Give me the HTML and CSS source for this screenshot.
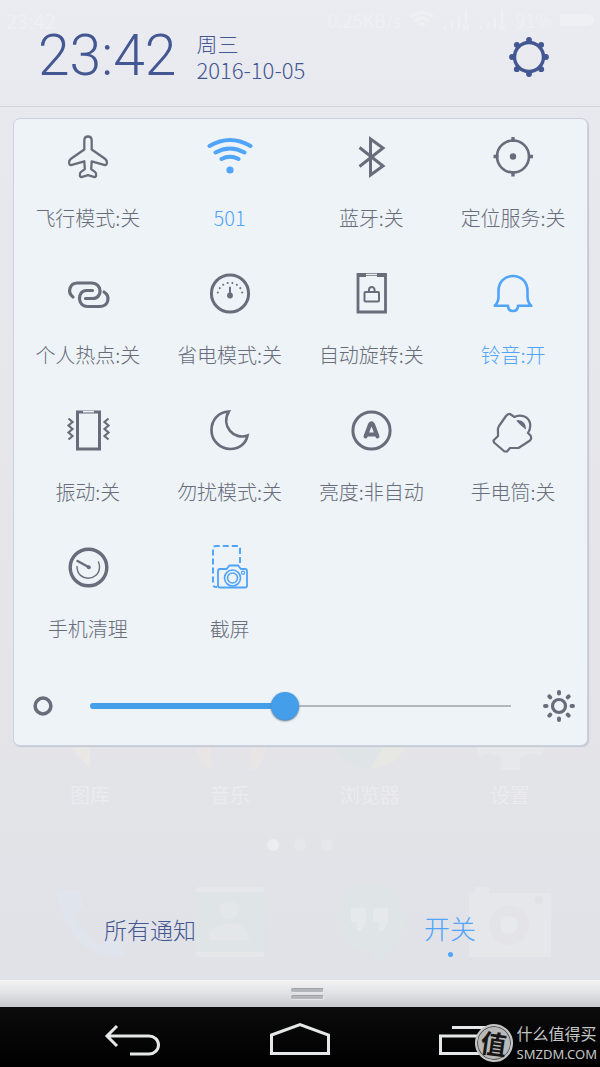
FILE: index.html
```html
<!DOCTYPE html>
<html lang="zh-CN">
<head>
<meta charset="utf-8">
<meta name="viewport" content="width=device-width, initial-scale=1">
<title>控制中心</title>
<link rel="stylesheet" href="styles.css">
</head>
<body>
<div class="screen">
  <main class="shade">
    <div class="home" aria-hidden="true">
      <div class="status">
        <span class="status-time">23:42</span>
        <span>0.25KB/s</span>
        <svg width="26" height="22" viewBox="0 0 26 22"><path d="M2 8Q13-1 24 8M6 12Q13 6 20 12M10 16Q13 13 16 16" fill="none" stroke="currentColor" stroke-width="3"/></svg>
        <svg width="28" height="22" viewBox="0 0 28 22"><path d="M2 20v-3M9 20v-7M16 20V8M23 14V1M20 16l6 5m0-5-6 5" fill="none" stroke="currentColor" stroke-width="2"/></svg>
        <svg width="28" height="22" viewBox="0 0 28 22"><path d="M2 20v-3M9 20v-7M16 20V8M23 14V1M20 16l6 5m0-5-6 5" fill="none" stroke="currentColor" stroke-width="2"/></svg>
        <span>91%</span>
        <svg width="34" height="14" viewBox="0 0 34 14"><path d="M0 1h31v3h3v6h-3v3H0z" fill="currentColor"/></svg>
      </div>
      <div class="apps">
        <div class="app"><svg width="80" height="80" viewBox="0 0 80 80"><path d="M15 52h25v26z" fill="#e9e8e4"/><path d="M40 52h22v7H40z" fill="#e0e6e9"/></svg><span>图库</span></div>
        <div class="app"><svg width="80" height="80" viewBox="0 0 80 80"><path d="M5 50h14l4 29h-6Q7 70 5 50zM77 50H63l-4 29h7q9-9 11-29z" fill="#e9e5e4"/></svg><span>音乐</span></div>
        <div class="app"><svg width="80" height="80" viewBox="0 0 80 80"><circle cx="40" cy="40" r="39" fill="#dfe5e7"/><path d="M40 79 58 50h20Q70 77 40 79z" fill="#e7e7e4"/></svg><span>浏览器</span></div>
        <div class="app"><svg width="80" height="80" viewBox="0 0 80 80"><path d="M4 53h72l-5 13-11-3-10 5v12H31V68l-10-5-11 3z" fill="#e7e8ec"/></svg><span>设置</span></div>
      </div>
      <div class="pages"><i class="page page-on"></i><i class="page"></i><i class="page"></i></div>
      <div class="dock">
        <div class="app"><svg width="80" height="83" viewBox="0 0 80 83"><path d="M6 8h24l3 17-8 9q8 18 26 29l9-7 14 5v14Q18 76 6 8z" fill="#dfe4ed"/></svg></div>
        <div class="app"><svg width="80" height="83" viewBox="0 0 80 83"><rect x="6" y="5" width="68" height="70" rx="3" fill="#e5e7ea"/><rect x="4" y="10" width="72" height="60" rx="3" fill="#dfe5e7"/><circle cx="39" cy="28" r="9" fill="#e4e7ea"/><path d="M19 58q0-16 20-16t20 16z" fill="#e4e7ea"/></svg></div>
        <div class="app"><svg width="80" height="83" viewBox="0 0 80 83"><path d="M40 0a35 35 0 0 1 35 35q0 28-31 46V70A35 35 0 0 1 40 0z" fill="#dfe5e6"/><path d="M21 26h15v14l-5 9h-4v-9h-6zM43 26h15v14l-5 9h-4v-9h-6z" fill="#e5e9eb"/></svg></div>
        <div class="app"><svg width="84" height="83" viewBox="0 0 84 83"><path d="M1 11h6V5h14v6h62v64H1z" fill="#e6e7eb"/><circle cx="41" cy="43" r="20" fill="#e4e3e7"/><circle cx="41" cy="43" r="9" fill="#e8e9ec"/><circle cx="71" cy="18" r="4" fill="#e1e2e6"/></svg></div>
      </div>
    </div>

    <header class="header">
      <time class="clock" datetime="23:42">23:42</time>
      <div class="date"><span>周三</span><time class="day" datetime="2016-10-05">2016-10-05</time></div>
      <button class="icon-button" type="button" aria-label="设置">
        <svg width="42" height="42" viewBox="0 0 42 42" fill="#435792"><circle cx="21" cy="21" r="14.5" fill="none" stroke="#435792" stroke-width="3.4"/><circle cx="21" cy="4" r="2.9"/><circle cx="21" cy="38" r="2.9"/><circle cx="4" cy="21" r="2.9"/><circle cx="38" cy="21" r="2.9"/><circle cx="8.8" cy="8.8" r="2.9"/><circle cx="33.2" cy="8.8" r="2.9"/><circle cx="8.8" cy="33.2" r="2.9"/><circle cx="33.2" cy="33.2" r="2.9"/></svg>
      </button>
    </header>

    <section class="panel" aria-label="开关">
      <div class="tiles">
        <button class="tile" type="button">
          <svg viewBox="0 0 46 46" stroke-width="2.3"><path d="M23 3.500c-2.300 0-3.700 1.700-3.700 4v9L6 25.800c-1.500 1.100-1.900 2.300-1.900 3.700 0 2 .9 3.100 2.800 2.400l12.400-3.600.5 7.800-4 3c-1.300 1-1.300 5.300.6 5.100l6.600-2.100 6.600 2.100c1.900.2 1.900-4.100.6-5.100l-4-3 .5-7.800 12.400 3.600c1.900.7 2.800-.4 2.800-2.400 0-1.400-.4-2.600-1.900-3.700l-13.300-9.300v-9c0-2.300-1.400-4-3.700-4z"/></svg>
          <span>飞行模式:关</span></button>
        <button class="tile tile-on" type="button">
          <svg viewBox="0 0 46 46" stroke-width="4"><path d="M2.500 13q20.500-12 41 0M8.500 19.500q14.500-8 29 0M14.500 26q8.500-4.500 17 0"/><circle cx="23" cy="37" r="3.600" fill="currentColor" stroke="none"/></svg>
          <span>501</span></button>
        <button class="tile" type="button">
          <svg class="crisp" viewBox="0 0 46 46" stroke-width="3"><path d="M11.500 14.500 35 33 22.500 42V6L35 15 11.500 33.500"/></svg>
          <span>蓝牙:关</span></button>
        <button class="tile" type="button">
          <svg class="crisp" viewBox="0 0 46 46" stroke-width="2.600"><circle cx="23" cy="23.500" r="16"/><path d="M23 4v5M23 38v5.500M3.500 23.500h5M38 23.500h5" stroke-width="3.400"/><circle cx="23" cy="23.500" r="3.200" fill="currentColor" stroke="none"/></svg>
          <span>定位服务:关</span></button>

        <button class="tile" type="button">
          <svg viewBox="0 0 46 46" stroke-width="3.200"><path d="M8 27C2 22.500 4.500 13 12.500 13h14c11 0 11.500 15.500 1 15.500h-7"/><path d="M27.500 20.500h-6c-9.500 0-9.500 16 1 16h12c9.500 0 11-10.500 4.500-14.500"/></svg>
          <span>个人热点:关</span></button>
        <button class="tile" type="button">
          <svg viewBox="0 0 46 46" stroke-width="3"><circle cx="23" cy="23.500" r="18.600"/><path d="M23 17.500V25" stroke-width="2"/><circle cx="23" cy="25.500" r="2.900" fill="currentColor" stroke="none"/><path d="M10.800 22.500a12.500 12.500 0 0 1 24.400 0" stroke-width="2" stroke-dasharray="0.100 4.700"/></svg>
          <span>省电模式:关</span></button>
        <button class="tile" type="button">
          <svg class="crisp" viewBox="0 0 46 46" stroke-width="2"><path d="M10 4.500h27.500v37.500H10z" stroke-width="2.800"/><path d="M9 5.500h9M29 5.500h9" stroke-width="3"/><path d="M18 4.500h11" stroke="#edf3f6" stroke-width="1.500"/><rect x="16.500" y="22" width="14.500" height="9.500" rx="1"/><path d="M21 22v-2a2.800 3 0 0 1 5.600 0v2"/></svg>
          <span>自动旋转:关</span></button>
        <button class="tile tile-on" type="button">
          <svg viewBox="0 0 46 46" stroke-width="2.600"><path d="M4.800 35.800c3.200-3 3.700-5.300 3.700-9.300V21c0-8.800 6-15 14.500-15s14.500 6.200 14.500 15v5.500c0 4 .5 6.300 3.700 9.300H28c-.2 3.200-2.300 5.200-5 5.200s-4.800-2-5-5.200z"/></svg>
          <span>铃音:开</span></button>

        <button class="tile" type="button">
          <svg class="crisp" viewBox="0 0 46 46" stroke-width="3"><path d="M12.500 5h22v37h-22z"/><path d="M18 4.700h11" stroke="#edf3f6" stroke-width="1.500"/><path d="m3.500 11.500 4 3.500-4 3.500 4 3.500-4 3.500 4 3.500-4 3.500M43.500 11.500l-4 3.500 4 3.500-4 3.500 4 3.500-4 3.500 4 3.500" stroke-width="2.200"/></svg>
          <span>振动:关</span></button>
        <button class="tile" type="button">
          <svg class="crisp" viewBox="0 0 46 46" stroke-width="2.700"><path d="M21.800 4.500C11.500 5 4.500 13 4.500 23.200c0 10.600 8.700 18.800 18.800 18.800C32.500 42 39 36.500 40.500 28.500 27 33.500 13.500 19 21.800 4.500z"/></svg>
          <span>勿扰模式:关</span></button>
        <button class="tile" type="button">
          <svg viewBox="0 0 46 46" stroke-width="3"><circle cx="23.500" cy="23.500" r="18.600"/><path d="M17.500 29.500 22 17.500q1.500-2.500 3 0l4.500 12M20 27.500h7" stroke-width="4"/></svg>
          <span>亮度:非自动</span></button>
        <button class="tile" type="button">
          <svg viewBox="0 0 46 46" stroke-width="2.200"><path d="M20 7q-2-.5-4 2L9 19q-1.500 2.500-1 5.500V29l-4.500 4.500.5 2 10.500 9h2.500l3-3.500h8.500l11.500-7.500q2-2 .5-5L38 26c4-6.500 2.500-14-3.500-16.500-4-1.500-7.500-1-10 .5z"/><path d="M26.500 14q0-1 1.500-1 7.500.5 8 8.500 0 1.500-1.500 0-3.500-2.500-8-7.500z" fill="currentColor" stroke="none"/></svg>
          <span>手电筒:关</span></button>

        <button class="tile" type="button">
          <svg viewBox="0 0 46 46" stroke-width="3.400"><circle cx="23.500" cy="23.500" r="18.300"/><path d="M12 22.500c0 16 22.500 15 22.500.5q0-2.500-1-5" stroke-width="1.400"/><path d="m12.500 17 11 6" stroke-width="2.400"/><circle cx="23.800" cy="23.200" r="2" fill="currentColor" stroke="none"/></svg>
          <span>手机清理</span></button>
        <button class="tile tile-bright" type="button">
          <svg class="crisp" viewBox="0 0 46 46" stroke-width="2"><path d="M33 19V5q0-3-3-3H9Q6 2 6 5v35q0 3 3 3h1" stroke-dasharray="6 3"/><path d="M13 25h6.500l3-3.500h8.500l3 3.500h4q2 0 2 2v15q0 1.500-2 1.500H13q-2 0-2-1.500V27q0-2 2-2z" stroke-width="1.800"/><circle cx="25.500" cy="34" r="8" stroke-width="1.600"/><circle cx="25.500" cy="34" r="5" stroke-width="1.600"/><circle cx="36" cy="28.800" r="1.600" stroke-width="1.200"/></svg>
          <span>截屏</span></button>
      </div>

      <div class="brightness">
        <svg width="20" height="20" viewBox="0 0 20 20" fill="none" stroke="currentColor"><circle cx="10" cy="10" r="7.900" stroke-width="3.500"/></svg>
        <input class="range" type="range" min="0" max="100" value="46" aria-label="屏幕亮度">
        <svg width="34" height="34" viewBox="0 0 34 34" fill="none" stroke="currentColor" stroke-width="4" stroke-linecap="round"><circle cx="17" cy="17" r="6.500" stroke-width="3.200"/><path d="M17 3v1.500M17 29.500V31M3 17h1.500M29.500 17H31M7.300 7.300l1 1M25.700 25.700l1 1M7.300 26.700l1-1M25.700 8.300l1-1"/></svg>
      </div>
    </section>

    <nav class="tabs" aria-label="页面">
      <a class="tab" href="#notifications">所有通知</a>
      <a class="tab tab-current" href="#switches" aria-current="page">开关</a>
    </nav>
  </main>

  <button class="handle" type="button" aria-label="收起"><i></i><i></i></button>

  <nav class="keys" aria-label="导航键">
    <button class="key" type="button" aria-label="返回"><svg width="58" height="34" viewBox="0 0 58 34"><path d="M14 4 4 14l10 10M4 14h42a9.500 9 0 0 1 0 18H27"/></svg></button>
    <button class="key" type="button" aria-label="主页"><svg width="62" height="34" viewBox="0 0 62 34"><path d="M2.500 13 31 2.500 59.500 13v18.500h-57z"/></svg></button>
    <button class="key" type="button" aria-label="最近任务"><svg width="60" height="34" viewBox="0 0 60 34"><path d="M14 5.500h43v19M2.500 14h43v17.500h-43z"/></svg></button>
    <div class="watermark">
      <span class="seal">值</span>
      <span class="brand"><span>什么值得买</span><span class="domain">SMZDM.COM</span></span>
    </div>
  </nav>
</div>
</body>
</html>
```
FILE: styles.css
```css
* {
  box-sizing: border-box;
}

body {
  margin: 0;
  background: #000;
  font-family: "Noto Sans CJK SC", sans-serif;
  font-weight: 300;
}

button {
  padding: 0;
  border: 0;
  background: none;
  color: inherit;
  font: inherit;
}

svg {
  display: block;
  flex: none;
}

.screen {
  display: flex;
  flex-direction: column;
  min-height: 100vh;
}

.shade {
  position: relative;
  z-index: 0;
  display: flex;
  flex: 1;
  flex-direction: column;
  overflow: hidden;
  background: linear-gradient(#ebecf1, #e8e9ee 12%, #e4e4e9 65%, #e1e2e7);
}

/* Faded launcher behind the shade */
.home {
  position: absolute;
  inset: 0;
  z-index: -1;
  display: flex;
  flex-direction: column;
  padding-bottom: 15px;
  color: #ebebef;
  font-weight: 400;
}

.status {
  display: flex;
  align-items: center;
  gap: 8px;
  height: 40px;
  padding: 0 6px;
  color: #eff0f4;
  font-size: 18px;
}

.status-time {
  flex: 1;
  font-size: 20px;
}

.apps,
.dock {
  display: grid;
  grid-template-columns: repeat(4, 1fr);
  padding: 0 20px;
}

.apps {
  margin-top: auto;
}

.app {
  display: flex;
  flex-direction: column;
  align-items: center;
  gap: 10px;
  font-size: 20px;
  line-height: 30px;
}

.pages {
  display: flex;
  justify-content: center;
  gap: 15px;
  padding: 29px 0 31px;
}

.page {
  width: 12px;
  height: 12px;
  border-radius: 50%;
  background: #e6e7eb;
}

.page-on {
  background: #ecedf1;
}

.header {
  display: flex;
  align-items: center;
  height: 107px;
  padding: 5px 50px 0 38px;
  border-bottom: 1px solid #d3d5dd;
  color: #435792;
}

.clock {
  font: 300 57px/64px Roboto, sans-serif;
}

.date {
  display: flex;
  flex: 1;
  flex-direction: column;
  margin-left: 20px;
  font-size: 21px;
  line-height: 26px;
}

.day {
  font-size: 22px;
}

.icon-button {
  margin-top: 2px;
}

.panel {
  margin: 11px 12px 0 13px;
  padding: 14px 3px 19px;
  border: 1px solid #cdd1df;
  border-radius: 7px;
  background: #edf3f6;
  box-shadow: 1px 1px 1px #c3c7d1;
  color: #696d7b;
}

.tiles {
  display: grid;
  grid-template-columns: repeat(4, 1fr);
  row-gap: 38px;
}

.tile {
  display: flex;
  flex-direction: column;
  align-items: center;
  gap: 25px;
  color: #696d7b;
  font-size: 20px;
  line-height: 28px;
  white-space: nowrap;
}

.tile svg {
  width: 46px;
  height: 46px;
  fill: none;
  stroke: currentColor;
  stroke-linecap: round;
  stroke-linejoin: round;
}

.tile .crisp {
  stroke-linecap: butt;
  stroke-linejoin: miter;
}

.tile-on {
  color: #50a4fa;
}

.tile-bright svg {
  color: #50a4fa;
}

.brightness {
  display: flex;
  align-items: center;
  height: 40px;
  margin-top: 43px;
  padding: 0 8px 0 16px;
}

.range {
  flex: 1;
  min-width: 0;
  height: 30px;
  margin: 0 31px 0 37px;
  appearance: none;
  background: none;
}

.range::-webkit-slider-runnable-track {
  height: 6px;
  border-radius: 3px 0 0 3px;
  background:
    linear-gradient(#459eea, #459eea) 0 0 / 46% 6px no-repeat,
    linear-gradient(#b1b7bb, #b1b7bb) 0 2px / 100% 2px no-repeat;
}

.range::-webkit-slider-thumb {
  width: 28px;
  height: 28px;
  margin-top: -11px;
  appearance: none;
  border-radius: 50%;
  background: #459eea;
  box-shadow: 0 1px 2px #4d6f8e;
}

.tabs {
  display: grid;
  flex: 1;
  grid-template-columns: 1fr 1fr;
  align-items: end;
  padding-bottom: 22px;
}

.tab {
  display: flex;
  flex-direction: column;
  align-items: center;
  height: 46px;
  color: #435792;
  font-size: 23px;
  line-height: 34px;
  text-decoration: none;
}

.tab-current {
  color: #50a4fa;
  font-size: 26px;
  line-height: 32px;
}

.tab-current::after {
  width: 5px;
  height: 5px;
  margin-top: 8px;
  border-radius: 50%;
  background: currentColor;
  content: "";
}

.handle {
  display: flex;
  flex-direction: column;
  align-items: center;
  justify-content: center;
  gap: 2px;
  height: 27px;
  padding-left: 14px;
  background: linear-gradient(#f4f4f5, #e0e1e4 50%, #c7c9cd);
}

.handle i {
  width: 33px;
  height: 5px;
  border: solid #e6e7ea;
  border-width: 1px 1px 1px 0;
  border-top-color: #a2a4a8;
  border-radius: 2px;
  background: #b3b5b9;
}

.keys {
  position: relative;
  display: grid;
  grid-template-columns: repeat(3, 1fr);
  height: 60px;
  padding: 0 48px;
  background: linear-gradient(#0b0b0b, #000);
}

.key {
  display: flex;
  align-items: center;
  justify-content: center;
  padding-top: 4px;
}

.key svg {
  fill: none;
  stroke: #e6e7e8;
  stroke-width: 3;
}

.watermark {
  position: absolute;
  right: 3px;
  bottom: 3px;
  display: flex;
  align-items: center;
  gap: 4px;
  color: #c5c6c7;
}

.seal {
  display: grid;
  place-items: center;
  width: 38px;
  height: 38px;
  border: 2px solid #c4c4c4;
  border-radius: 50%;
  background: #b9b9b9;
  box-shadow: inset 0 0 0 1px #555;
  color: #161616;
  font-size: 26px;
  font-weight: 700;
  line-height: 32px;
  transform: rotate(8deg);
}

.brand {
  display: flex;
  flex-direction: column;
  font-size: 16px;
  font-weight: 400;
  line-height: 22px;
}

.domain {
  font-family: "Noto Sans", sans-serif;
  font-size: 13px;
  line-height: 20px;
}
```
